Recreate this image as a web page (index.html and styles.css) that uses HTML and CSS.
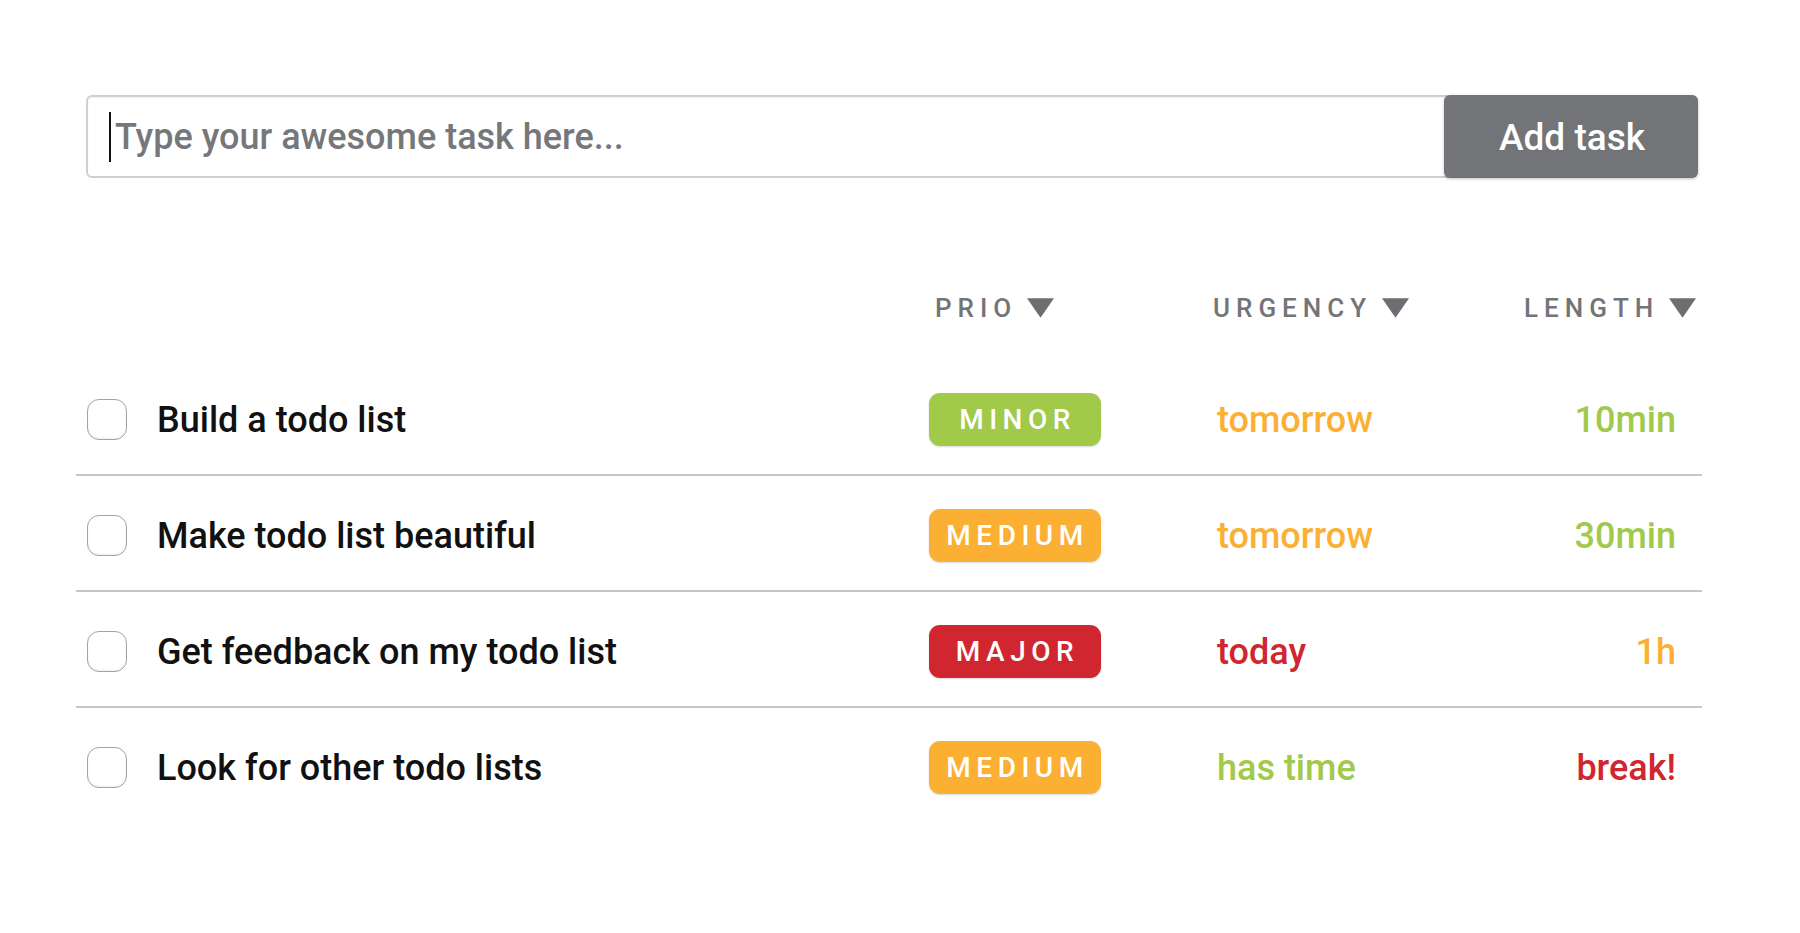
FILE: index.html
```html
<!DOCTYPE html>
<html lang="en">
<head>
<meta charset="utf-8">
<title>Todo list</title>
<link rel="stylesheet" href="styles.css">
</head>
<body>
<main class="app">
  <form class="add-form">
    <div class="field">
      <span class="caret"></span>
      <input class="task-input" type="text" placeholder="Type your awesome task here...">
    </div>
    <button class="add-btn" type="button">Add task</button>
  </form>

  <div class="head">
    <div class="head-spacer"></div>
    <div class="head-item head-prio">PRIO<svg class="tri" viewBox="0 0 26 19"><path d="M0 0H26L13 19Z"/></svg></div>
    <div class="head-item head-urgency">URGENCY<svg class="tri" viewBox="0 0 26 19"><path d="M0 0H26L13 19Z"/></svg></div>
    <div class="head-item head-length">LENGTH<svg class="tri" viewBox="0 0 26 19"><path d="M0 0H26L13 19Z"/></svg></div>
  </div>

  <ul class="list">
    <li class="row">
      <input class="check" type="checkbox">
      <span class="task">Build a todo list</span>
      <span class="badge minor">MINOR</span>
      <span class="urgency orange">tomorrow</span>
      <span class="length green">10min</span>
    </li>
    <li class="row">
      <input class="check" type="checkbox">
      <span class="task">Make todo list beautiful</span>
      <span class="badge medium">MEDIUM</span>
      <span class="urgency orange">tomorrow</span>
      <span class="length green">30min</span>
    </li>
    <li class="row">
      <input class="check" type="checkbox">
      <span class="task">Get feedback on my todo list</span>
      <span class="badge major">MAJOR</span>
      <span class="urgency red">today</span>
      <span class="length orange">1h</span>
    </li>
    <li class="row">
      <input class="check" type="checkbox">
      <span class="task">Look for other todo lists</span>
      <span class="badge medium">MEDIUM</span>
      <span class="urgency green">has time</span>
      <span class="length red">break!</span>
    </li>
  </ul>
</main>
</body>
</html>
```

FILE: styles.css
```css
* { box-sizing: border-box; }

html, body {
  margin: 0;
  padding: 0;
  background: #ffffff;
}

body {
  font-family: Roboto, "Liberation Sans", Arial, sans-serif;
  font-weight: 500;
  color: #111111;
}

.app {
  width: 1626px;
  margin-left: 76px;
  padding-top: 95px;
}

/* ---------- add form ---------- */
.add-form {
  display: flex;
  height: 83px;
  margin: 0 4px 0 10px;
  border: 2px solid #cfcfd0;
  border-radius: 6px;
  box-shadow: inset 0 1px 2px rgba(0,0,0,0.06);
}

.field {
  position: relative;
  flex: 1;
  display: flex;
  align-items: center;
}

.caret {
  position: absolute;
  left: 21px;
  top: 15px;
  width: 2px;
  height: 50px;
  background: #111;
}

.task-input {
  width: 100%;
  height: 100%;
  border: 0;
  outline: none;
  background: transparent;
  padding: 0 0 0 27px;
  font-family: inherit;
  font-weight: 500;
  font-size: 36px;
  color: #111;
}

.task-input::placeholder {
  color: #76777b;
  opacity: 1;
}

.add-btn {
  width: 254px;
  margin: -2px -2px -2px 0;
  border: 0;
  border-radius: 6px;
  background: #737478;
  color: #ffffff;
  font-family: inherit;
  font-weight: 500;
  font-size: 37px;
  box-shadow: 0 1px 3px rgba(0,0,0,0.25);
  padding: 2px 0 0 2px;
}

/* ---------- header ---------- */
.head {
  display: flex;
  align-items: center;
  height: 40px;
  margin-top: 110px;
  margin-bottom: 32px;
  padding-right: 4px;
  color: #737478;
  font-size: 26px;
  letter-spacing: 6px;
}

.head-spacer { flex: 1; }

.head-item {
  display: flex;
  align-items: center;
}

.head-prio { width: 278px; }
.head-urgency { width: 311px; }
.head-length { width: 174px; }

.tri {
  width: 27px;
  height: 20px;
  margin-left: 10px;
  fill: #6d6e72;
  flex: none;
}

/* ---------- list ---------- */
.list {
  list-style: none;
  margin: 0;
  padding: 0;
}

.row {
  display: flex;
  align-items: center;
  padding: 33px 26px 28px 11px;
  border-bottom: 2px solid #c6c6c8;
}

.row:last-child { border-bottom: 0; }

.check {
  appearance: none;
  -webkit-appearance: none;
  flex: none;
  width: 40px;
  height: 41px;
  margin: 0;
  border: 1.5px solid #a3a3a6;
  border-radius: 12px;
  background: #fff;
  box-shadow: inset 0 -1px 2px rgba(0,0,0,0.08);
}

.task {
  flex: 1;
  margin-left: 30px;
  font-size: 36px;
  line-height: 40px;
  color: #111111;
}

.badge {
  flex: none;
  width: 172px;
  height: 53px;
  border-radius: 11px;
  display: flex;
  align-items: center;
  justify-content: center;
  padding-left: 5px;
  color: #ffffff;
  font-size: 28px;
  letter-spacing: 5.5px;
  box-shadow: 0 1px 2px rgba(0,0,0,0.15);
}

.badge.minor { background: #a1c94a; }
.badge.medium { background: #fbb034; }
.badge.major { background: #d0262f; }

.urgency {
  flex: none;
  width: 260px;
  margin-left: 116px;
  font-size: 36px;
  line-height: 40px;
}

.length {
  flex: none;
  width: 199px;
  text-align: right;
  font-size: 36px;
  line-height: 40px;
}

.green { color: #a1c94a; }
.orange { color: #fbb034; }
.red { color: #d0262f; }
```
